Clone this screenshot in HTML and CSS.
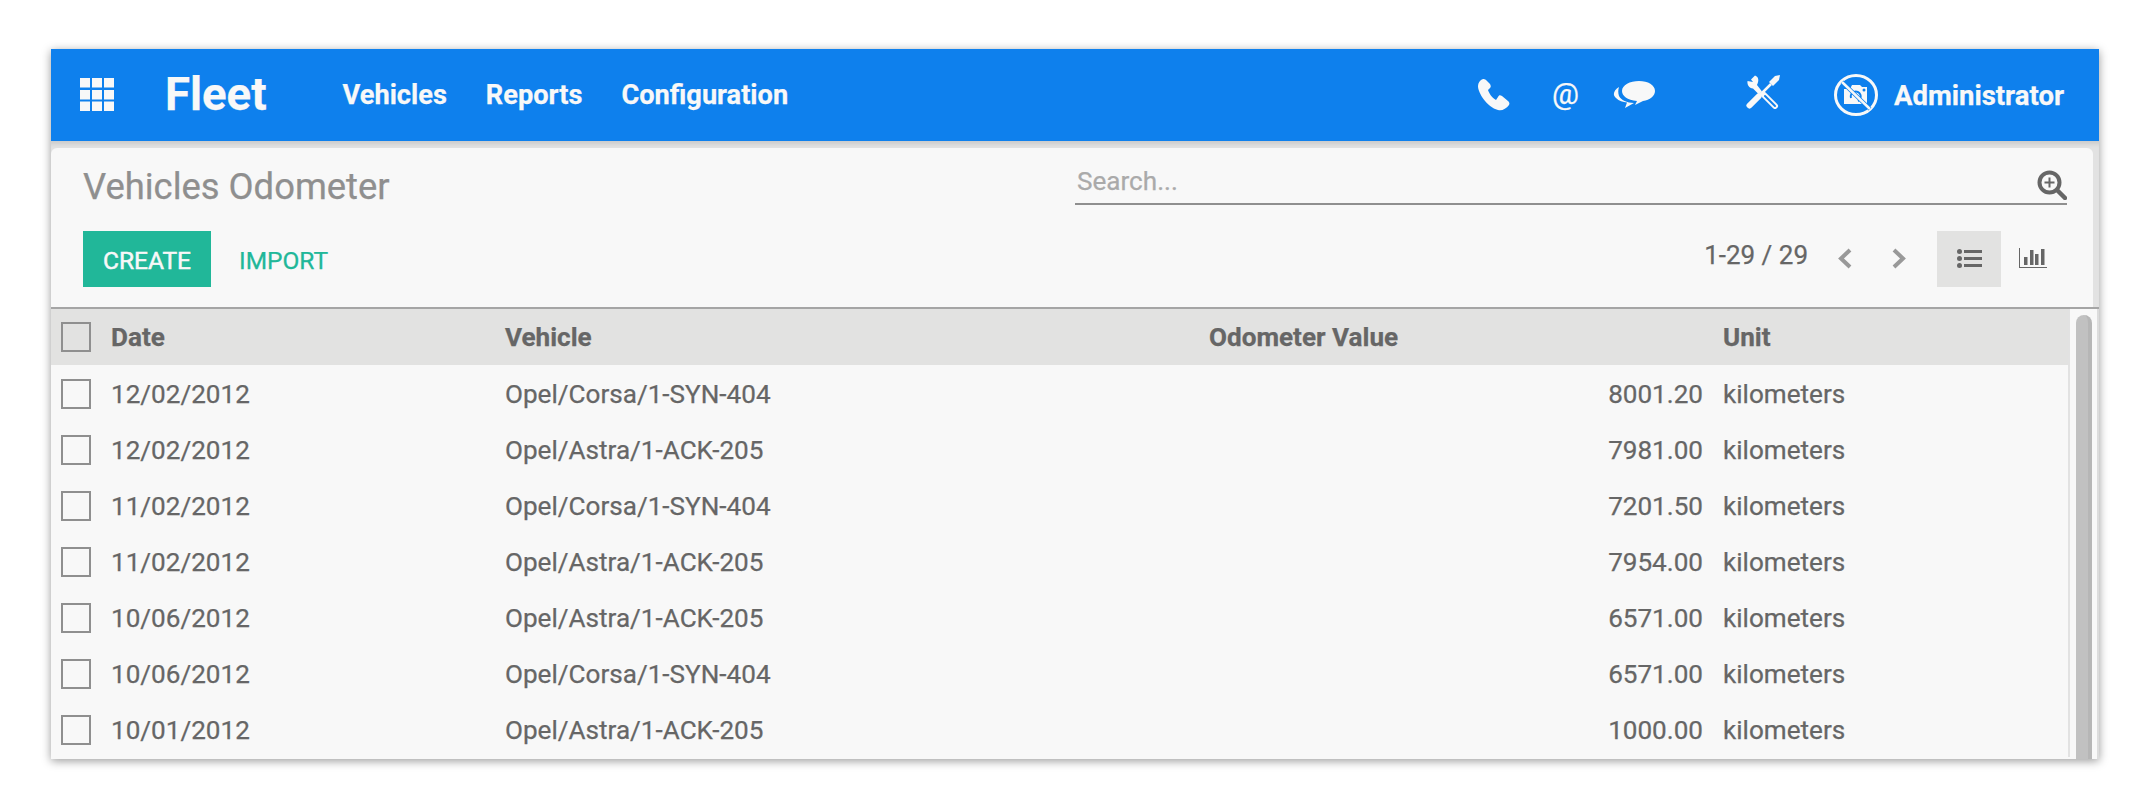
FILE: index.html
```html
<!DOCTYPE html>
<html lang="en">
<head>
<meta charset="utf-8">
<title>Vehicles Odometer - Fleet</title>
<link rel="stylesheet" href="styles.css">
</head>
<body>
<div class="window">
  <header class="nav">
    <svg class="apps" viewBox="0 0 34 33" aria-hidden="true"><g fill="#f8f8f8"><rect x="0" y="0" width="10" height="9.5"/><rect x="12" y="0" width="10" height="9.5"/><rect x="24" y="0" width="10" height="9.5"/><rect x="0" y="12" width="10" height="9.5"/><rect x="12" y="12" width="10" height="9.5"/><rect x="24" y="12" width="10" height="9.5"/><rect x="0" y="23.5" width="10" height="9.5"/><rect x="12" y="23.5" width="10" height="9.5"/><rect x="24" y="23.5" width="10" height="9.5"/></g></svg>
    <span class="brand">Fleet</span>
    <nav class="menu"><a>Vehicles</a><a>Reports</a><a>Configuration</a></nav>
    <div class="systray">
      <svg class="ico-phone" viewBox="0 0 32 32" aria-hidden="true"><path fill="#f8f8f8" d="M5 0C2 1 0 4 0 7c0 7 9 21 20 24 4 1 8-1 11-5 1-2 0-3-1-4l-6-5c-2-1-3-1-4 1l-2 3c-4-2-7-7-8-10l2-2c1-1 1-2 0-4L8 1C7 0 6 0 5 0z"/></svg>
      <span class="at">@</span>
      <svg class="ico-chat" viewBox="0 0 42 28" aria-hidden="true"><g fill="#f8f8f8"><path d="M26 0c9 0 16 4 16 10 0 5-5 9-12 10l-8 4 2-4C14 19 9 15 9 10 9 4 17 0 26 0z"/><path d="M6 6C1 9-1 14 3 17c3 3 7 4 11 4.500L12 27l9-5c-7 0-13-3-15-7-1-3-1-6 0-9z"/></g></svg>
      <svg class="ico-tools" viewBox="0 0 34 34" aria-hidden="true"><path fill="#f8f8f8" d="M9 .5L5 4.500l2 2.500-5.500-1C1 10 3 13 7 13.500l6 6 3-3-5-6.500c2-4 2-8-2-9.500z"/><path fill="none" stroke="#f8f8f8" stroke-width="6" stroke-linecap="round" d="M3.500 30.500l9-9"/><path fill="none" stroke="#f8f8f8" stroke-width="2.500" d="M12 22L25 9"/><path fill="#f8f8f8" d="M23 7l6-6 5-1-1 5-6 6z"/><path fill="none" stroke="#f8f8f8" stroke-width="6" stroke-linecap="round" d="M18 20l11 11"/><path fill="none" stroke="#0e80ed" stroke-width="2" stroke-linecap="round" d="M19 21l10 10"/></svg>
      <svg class="ico-avatar" viewBox="0 0 44 42" aria-hidden="true"><ellipse cx="22" cy="21" rx="20.500" ry="19.500" fill="none" stroke="#f8f8f8" stroke-width="3"/><path fill="#f8f8f8" d="M10 15h6l2-4h8l2 2h5v17H10z"/><path fill="none" stroke="#0e80ed" stroke-width="2" d="M17 24a5 5 0 1 1 7 3"/><circle cx="30" cy="16" r="1.500" fill="#0e80ed"/><path stroke="#0e80ed" stroke-width="4" d="M8 8l28 27"/><path stroke="#f8f8f8" stroke-width="2.500" d="M8 8l28 27"/></svg>
      <span class="user">Administrator</span>
    </div>
  </header>
  <div class="control-wrap">
    <section class="control">
      <div class="control-top">
        <h1 class="title">Vehicles Odometer</h1>
        <div class="search">
          <span class="placeholder">Search...</span>
          <svg class="ico-search" viewBox="0 0 30 30" aria-hidden="true"><g fill="none" stroke="#666"><circle cx="12.500" cy="12.500" r="10" stroke-width="4"/><path stroke-width="2" d="M7.500 12.500h10M12.500 7.500v10"/><path stroke-width="4.500" stroke-linecap="round" d="M20 20l8 8"/></g></svg>
        </div>
      </div>
      <div class="control-bottom">
        <button class="btn-create">CREATE</button>
        <button class="btn-import">IMPORT</button>
        <span class="pager">1-29 / 29</span>
        <svg class="chev" viewBox="0 0 15 21" aria-hidden="true"><path fill="none" stroke="#999" stroke-width="4" d="M13 2L4 10.500 13 19"/></svg>
        <svg class="chev chev-next" viewBox="0 0 15 21" aria-hidden="true"><path fill="none" stroke="#999" stroke-width="4" d="M2 2l9 8.500L2 19"/></svg>
        <div class="view view-active"><svg class="ico-list" viewBox="0 0 25 19" aria-hidden="true"><g fill="#666"><circle cx="2.500" cy="2.500" r="2.500"/><circle cx="2.500" cy="9.500" r="2.500"/><circle cx="2.500" cy="16.500" r="2.500"/><rect x="7" y="1" width="18" height="3"/><rect x="7" y="8" width="18" height="3"/><rect x="7" y="15" width="18" height="3"/></g></svg></div>
        <div class="view"><svg class="ico-chart" viewBox="0 0 28 20" aria-hidden="true"><g fill="#666"><rect x="0" y="0" width="1" height="20"/><rect x="0" y="19" width="28" height="1.500"/><rect x="5" y="9" width="3.500" height="8"/><rect x="11" y="2" width="3.500" height="15"/><rect x="16" y="6" width="3.500" height="11"/><rect x="22" y="1" width="3.500" height="16"/></g></svg></div>
      </div>
    </section>
  </div>
  <div class="content">
    <table class="grid">
      <colgroup><col class="c-check"><col class="c-date"><col class="c-vehicle"><col class="c-value"><col class="c-unit"></colgroup>
      <thead><tr><th><span class="box"></span></th><th>Date</th><th>Vehicle</th><th>Odometer Value</th><th>Unit</th></tr></thead>
      <tbody>
        <tr><td><span class="box"></span></td><td>12/02/2012</td><td>Opel/Corsa/1-SYN-404</td><td class="num">8001.20</td><td>kilometers</td></tr>
        <tr><td><span class="box"></span></td><td>12/02/2012</td><td>Opel/Astra/1-ACK-205</td><td class="num">7981.00</td><td>kilometers</td></tr>
        <tr><td><span class="box"></span></td><td>11/02/2012</td><td>Opel/Corsa/1-SYN-404</td><td class="num">7201.50</td><td>kilometers</td></tr>
        <tr><td><span class="box"></span></td><td>11/02/2012</td><td>Opel/Astra/1-ACK-205</td><td class="num">7954.00</td><td>kilometers</td></tr>
        <tr><td><span class="box"></span></td><td>10/06/2012</td><td>Opel/Astra/1-ACK-205</td><td class="num">6571.00</td><td>kilometers</td></tr>
        <tr><td><span class="box"></span></td><td>10/06/2012</td><td>Opel/Corsa/1-SYN-404</td><td class="num">6571.00</td><td>kilometers</td></tr>
        <tr><td><span class="box"></span></td><td>10/01/2012</td><td>Opel/Astra/1-ACK-205</td><td class="num">1000.00</td><td>kilometers</td></tr>
      </tbody>
    </table>
    <div class="scroll"><div class="thumb"></div></div>
  </div>
</div>
</body>
</html>
```
FILE: styles.css
```css
html, body { margin: 0; padding: 0; background: #fff; }
html { height: 100%; }
body { box-sizing: border-box; min-height: 100%; padding: 49px 51px 0; font-family: Roboto, "Liberation Sans", sans-serif; color: #666; -webkit-text-stroke: .25px; }
.window {
  width: 2048px; height: 710px; display: flex; flex-direction: column; overflow: hidden;
  box-shadow: 0 2px 9px rgba(0,0,0,.4); background: #f8f8f8;
}
.nav { height: 92px; flex: none; display: flex; align-items: center; background: #0e80ed; color: #f8f8f8; padding-left: 29px; z-index: 1; }
.apps { width: 34px; height: 33px; margin-top: -1px; }
.brand { font-size: 45.5px; font-weight: 700; margin-left: 51px; line-height: 1; }
.menu { display: flex; gap: 39px; margin-left: 76px; font-size: 27.2px; font-weight: 700; }
.systray { margin-left: auto; display: flex; align-items: center; padding-right: 35px; }
.ico-phone { width: 32px; height: 32px; }
.at { font-size: 30px; font-weight: 400; margin: -3px 0 0 42px; width: 26px; text-align: center; }
.ico-chat { width: 42px; height: 28px; margin-left: 35px; }
.ico-tools { width: 34px; height: 34px; margin-left: 91px; margin-top: -7px; }
.ico-avatar { width: 44px; height: 42px; margin-left: 54px; }
.user { font-size: 27.5px; font-weight: 700; margin-left: 16px; }
.control-wrap { flex: none; background: #e2e2e2; padding: 7px 6px 0 0; border-bottom: 2px solid #a5a5a5; box-shadow: inset 0 6px 4px -3px rgba(0,0,0,.1); }
.control { height: 159px; background: #f8f8f8; border-radius: 6px 6px 0 0; display: flex; flex-direction: column; padding: 0 26px 0 32px; box-sizing: border-box; }
.control-top { display: flex; align-items: flex-start; height: 83px; }
.title { margin: 18px 0 0; font-size: 36.4px; font-weight: 400; color: #8f8f8f; line-height: 42px; }
.search { margin-left: auto; width: 992px; height: 57px; box-sizing: border-box; border-bottom: 2px solid #8f8f8f; display: flex; justify-content: space-between; align-items: flex-start; }
.placeholder { font-size: 26.1px; color: #aaa; margin: 18px 0 0 2px; line-height: 30px; }
.ico-search { width: 30px; height: 30px; margin-top: 22px; }
.control-bottom { display: flex; align-items: center; height: 56px; padding-right: 2px; }
.btn-create, .btn-import { border: 0; height: 56px; font: 400 24.5px Roboto, "Liberation Sans", sans-serif; padding: 2px 0 0; cursor: pointer; }
.btn-create { width: 128px; background: #21b799; color: #f8f8f8; -webkit-text-stroke: .5px; }
.btn-import { width: 89px; margin-left: 28px; background: none; color: #21b799; }
.pager { margin-left: auto; font-size: 26px; color: #666; margin-top: -8px; }
.chev { width: 15px; height: 21px; margin: -2px 0 0 29px; }
.chev-next { margin-left: 40px; }
.view { width: 64px; height: 56px; display: flex; align-items: center; justify-content: center; }
.view-active { background: #e2e2e1; margin-left: 30px; }
.ico-list { width: 25px; height: 19px; margin-top: -2px; }
.ico-chart { width: 28px; height: 20px; margin-top: -2px; }
.content { flex: 1; min-height: 0; display: flex; }
.grid { width: 2018px; flex: none; align-self: flex-start; border-collapse: collapse; table-layout: fixed; font-size: 26.1px; color: #666; border-right: 2px solid #e2e2e2; }
.c-check { width: 60px; } .c-date { width: 394px; } .c-vehicle { width: 704px; } .c-value { width: 514px; } .c-unit { width: 346px; }
tr { height: 56px; }
th, td { padding: 0; text-align: left; font-weight: 400; vertical-align: middle; }
td { padding-top: 2px; }
thead tr { background: #e2e2e1; }
th { font-weight: 700; }
th:first-child, td:first-child { padding-left: 10px; }
.num { text-align: right; padding-right: 20px; }
.box { display: block; width: 30px; height: 30px; box-sizing: border-box; border: 2px solid #8f8f8f; }
td .box { margin-top: -1px; }
.scroll { flex: 1; background: #f8f8f8; padding: 6px 4px 0 6px; display: flex; border-right: 2px solid #dcdcdc; box-sizing: border-box; }
.thumb { width: 16px; box-sizing: border-box; background: #c1c1c1; border-right: 4px solid #b6b6b6; border-radius: 8px 8px 0 0; }
```
